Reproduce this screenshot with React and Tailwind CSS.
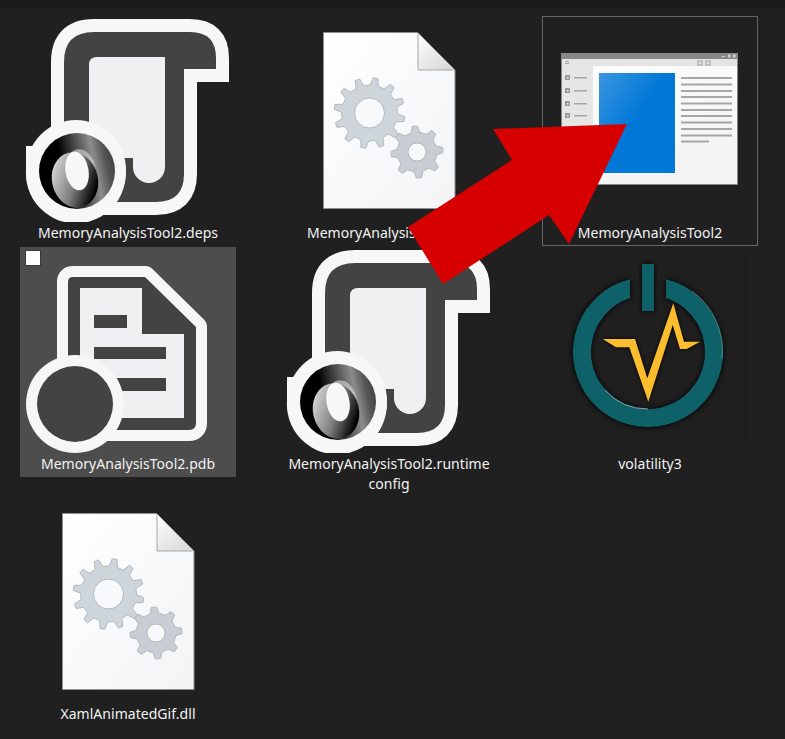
function gearPath(cx, cy, outer, root, teeth, rot = 0) {
  const pts = []
  const step = (Math.PI * 2) / teeth
  for (let i = 0; i < teeth; i++) {
    const a = rot + i * step
    const p = (r, t) => `${(cx + r * Math.cos(a + t * step)).toFixed(1)} ${(cy + r * Math.sin(a + t * step)).toFixed(1)}`
    pts.push(p(root, -0.28), p(outer, -0.13), p(outer, 0.13), p(root, 0.28))
  }
  return 'M' + pts.join('L') + 'Z'
}

function JsonIcon({ id }) {
  const dark = 'M44 46Q44 16 74 16H170Q196 16 196 42V53H164V158Q164 186 136 186H70Q44 186 44 160Z'
  return (
    <svg width="216" height="206" viewBox="0 0 216 206">
      <defs>
        <linearGradient id={`${id}a`} x1="0.05" y1="0.45" x2="1" y2="0.25">
          <stop offset="0.25" stopColor="#000" />
          <stop offset="0.7" stopColor="#8c8c8c" />
          <stop offset="0.85" stopColor="#565656" />
          <stop offset="1" stopColor="#3a3a3a" />
        </linearGradient>
        <linearGradient id={`${id}b`} x1="0" y1="0.3" x2="0.85" y2="0.95">
          <stop offset="0" stopColor="#d4d4d4" />
          <stop offset="0.5" stopColor="#7c7c7c" />
          <stop offset="0.92" stopColor="#000" />
        </linearGradient>
        <linearGradient id={`${id}c`} x1="0.2" y1="0" x2="0.8" y2="1">
          <stop offset="0" stopColor="#9a9a9a" />
          <stop offset="0.6" stopColor="#bdbdbd" />
          <stop offset="1" stopColor="#808080" />
        </linearGradient>
      </defs>
      <path d={dark} fill="#f7f7f7" stroke="#f7f7f7" strokeWidth="26" strokeLinejoin="miter" />
      <path d={dark} fill="#434343" />
      <path d="M77 41H145V151A16 16 0 0 1 113 151V142H69V49Q69 41 77 41Z" fill="#f0f0f2" />
      <path d="M6 130H14A50 50 0 1 1 6 154Z" fill="#f7f7f7" />
      <circle cx="56" cy="154" r="50" fill="#f7f7f7" />
      <circle cx="57" cy="155" r="38" fill={`url(#${id}a)`} />
      <ellipse cx="61" cy="154" rx="15" ry="21" transform="rotate(-12 61 154)" fill={`url(#${id}c)`} />
      <ellipse cx="55" cy="164" rx="23" ry="28" transform="rotate(-14 55 164)" fill={`url(#${id}b)`} />
      <ellipse cx="57" cy="155" rx="11.5" ry="19.5" transform="rotate(-10 57 155)" fill="#f7f7f7" />
    </svg>
  )
}

function PdbIcon() {
  const dark = 'M53 30H125L176 80V176Q176 183 169 183H48V35Q48 30 53 30Z'
  return (
    <svg width="216" height="206" viewBox="0 0 216 206">
      <path d={dark} fill="#f6f6f6" stroke="#f6f6f6" strokeWidth="22" strokeLinejoin="round" />
      <path d={dark} fill="#434343" />
      <path d="M60 41H122V87H164V171H60Z" fill="#f0eff1" />
      <rect x="74" y="68" width="33" height="13" fill="#434343" />
      <rect x="74" y="100" width="72" height="12" fill="#434343" />
      <rect x="74" y="131" width="72" height="13" fill="#434343" />
      <circle cx="55" cy="157" r="49" fill="#f6f6f6" />
      <circle cx="55" cy="157" r="38" fill="#434343" />
    </svg>
  )
}

function GearFile({ id }) {
  return (
    <svg width="216" height="206" viewBox="0 0 216 206">
      <defs>
        <linearGradient id={`${id}p`} x1="0" y1="0" x2="1" y2="1">
          <stop offset="0" stopColor="#ffffff" />
          <stop offset="1" stopColor="#f2f4f6" />
        </linearGradient>
        <linearGradient id={`${id}f`} x1="0" y1="0" x2="0.8" y2="1">
          <stop offset="0" stopColor="#ffffff" />
          <stop offset="1" stopColor="#d9d9d9" />
        </linearGradient>
      </defs>
      <path d="M42.5 16.5H136.5L174 54V192.5H42.5Z" fill={`url(#${id}p)`} stroke="#8f8f8f" />
      <path d="M137 17V54H173Z" fill={`url(#${id}f)`} />
      <path d="M137 17V54H173" fill="none" stroke="#a8a8a8" />
      <path d={gearPath(88.5, 97, 35.5, 28, 12, -0.35)} fill="#ced5db" stroke="#b2bac0" strokeLinejoin="round" />
      <circle cx="88.5" cy="97" r="15" fill="#f8f9fa" stroke="#b2bac0" />
      <path d={gearPath(136, 136, 26, 20, 8, -0.08)} fill="#c8ced3" stroke="#b2bac0" strokeLinejoin="round" />
      <circle cx="136" cy="136" r="9" fill="#f8f9fa" stroke="#b2bac0" />
    </svg>
  )
}

function WindowIcon() {
  const lineYs = [61, 67.5, 74, 80, 86.5, 93, 99, 105.5, 112, 118.5]
  const sideYs = [61, 74, 87, 99]
  return (
    <svg width="216" height="206" viewBox="0 0 216 206">
      <defs>
        <linearGradient id="blue" x1="0" y1="0" x2="1" y2="0.9">
          <stop offset="0" stopColor="#3b95e0" />
          <stop offset="0.5" stopColor="#0078d7" />
          <stop offset="1" stopColor="#0078d7" />
        </linearGradient>
        <linearGradient id="win" x1="0" y1="0" x2="0.6" y2="1">
          <stop offset="0" stopColor="#ffffff" />
          <stop offset="1" stopColor="#f3f3f3" />
        </linearGradient>
      </defs>
      <rect x="19" y="37" width="177" height="132" fill="#888a8a" />
      <rect x="20" y="43" width="175" height="125" fill="url(#win)" />
      <rect x="20" y="43" width="175" height="7" fill="#e4e4e4" />
      <rect x="20" y="50" width="31" height="118" fill="#e6e6e6" />
      <rect x="57" y="57" width="76" height="100" fill="url(#blue)" />
      {lineYs.map((y) => (
        <rect key={y} x="139" y={y} width="51" height="2" fill="#a6a6a6" />
      ))}
      <rect x="139" y="124.5" width="28" height="2" fill="#a6a6a6" />
      {sideYs.map((y) => (
        <g key={y}>
          <rect x="23" y={y - 2} width="5" height="5" fill="#9a9a9a" />
          <rect x="25" y={y} width="1.5" height="1.5" fill="#f0f0f0" />
          <rect x="32" y={y} width="13" height="1.5" fill="#a6a6a6" />
        </g>
      ))}
      <rect x="23" y="45" width="4" height="1" fill="#a6a6a6" />
      <rect x="23" y="47" width="4" height="1" fill="#a6a6a6" />
      <rect x="156" y="45" width="4" height="4" fill="none" stroke="#a0a0a0" />
      <rect x="164" y="45" width="4" height="4" fill="none" stroke="#a0a0a0" />
      <rect x="180" y="40" width="3" height="1" fill="#d0d0d0" />
      <rect x="186" y="38.5" width="2.5" height="3" fill="#d0d0d0" />
      <rect x="191" y="38.5" width="2.5" height="3" fill="#d0d0d0" />
    </svg>
  )
}

function VolatilityIcon() {
  const ring = 'M124 32.2A75 75 0 1 1 88 32.2V50.9A57 57 0 1 0 124 50.9Z'
  const spark = 'M60.7 92H93L105.3 131.3L131.3 56.3L142 94.7H158L144.7 102H138L130.7 78L106.3 154.7L87.3 100.3H74Z'
  return (
    <svg width="216" height="206" viewBox="0 0 216 206">
      <defs>
        <filter id="soft" x="-20%" y="-20%" width="140%" height="140%">
          <feGaussianBlur stdDeviation="3" />
        </filter>
        <filter id="edge" x="-5%" y="-5%" width="110%" height="110%">
          <feGaussianBlur stdDeviation="2" />
        </filter>
      </defs>
      <rect x="12" y="7" width="189" height="191" fill="#141414" filter="url(#edge)" opacity="0.35" />
      <rect x="11" y="6" width="189" height="191" fill="#1f1f1f" />
      <path d={ring} fill="#000" filter="url(#soft)" />
      <path d="M100 17H112V64H100Z" fill="#000" filter="url(#soft)" />
      <path d={ring} fill="#0e6168" />
      <path d="M150 44A74 74 0 0 1 180 112" fill="none" stroke="#7fa5a8" strokeWidth="1" opacity="0.6" />
      <path d="M63 143A57 57 0 0 0 106 162" fill="none" stroke="#a5c0c2" strokeWidth="1" opacity="0.8" />
      <rect x="100" y="17" width="12" height="47" fill="#0e6168" />
      <path d={spark} fill="#000" filter="url(#edge)" />
      <path d={spark} fill="#fbbd2d" />
    </svg>
  )
}

function Tile({ label, children, className = '' }) {
  return (
    <div className={`relative w-[216px] h-[230px] ${className}`}>
      <div className="h-[207px] w-full">{children}</div>
      <div className="w-full text-center text-[14px] leading-[20px] tracking-[0.04px] text-[#f2f2f2] whitespace-pre-line">{label}</div>
    </div>
  )
}

export default function App() {
  return (
    <div className="relative w-[785px] h-[739px] overflow-hidden bg-[#202020] font-['Noto_Sans',sans-serif]">
      <div className="h-2 bg-[#1a1a1a]"></div>
      <div className="grid grid-cols-[216px_216px_216px] grid-rows-[230px_249px_230px] gap-x-[45px] gap-y-px pt-2 pl-5">
        <Tile label="MemoryAnalysisTool2.deps"><JsonIcon id="j1" /></Tile>
        <Tile label="MemoryAnalysisTool2.dll"><GearFile id="g1" /></Tile>
        <Tile label="MemoryAnalysisTool2" className="outline outline-1 -outline-offset-1 outline-[#666666]"><WindowIcon /></Tile>
        <Tile label="MemoryAnalysisTool2.pdb" className="bg-[#4d4d4d]">
          <PdbIcon />
          <div className="absolute left-[5px] top-[3px] w-4 h-4 bg-white border border-[#3a3a3a]"></div>
        </Tile>
        <Tile label={'MemoryAnalysisTool2.runtime\nconfig'}><JsonIcon id="j2" /></Tile>
        <Tile label="volatility3"><VolatilityIcon /></Tile>
        <Tile label="XamlAnimatedGif.dll"><GearFile id="g2" /></Tile>
      </div>
      <svg className="absolute inset-0" width="785" height="739" viewBox="0 0 785 739">
        <path d="M627 124L493 129L512 160L408 227L443 284L549 215L569 244Z" fill="#d60000" />
      </svg>
    </div>
  )
}
